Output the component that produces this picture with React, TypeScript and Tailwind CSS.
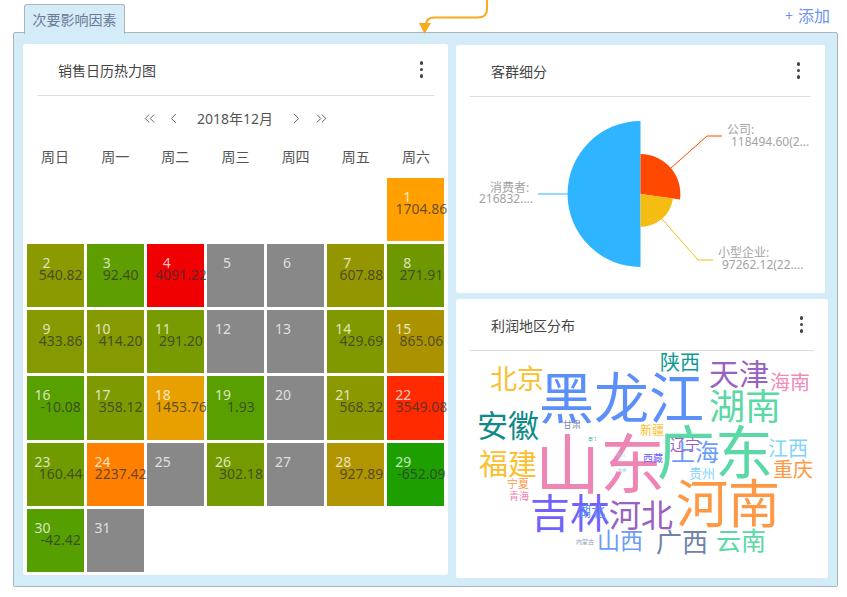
import React from "react";
import { ChevronLeft, ChevronRight, ChevronsLeft, ChevronsRight } from "lucide-react";

type Day = { d: number; v?: string; bg: string };

const days: Day[] = [
  { d: 1, v: "1704.86", bg: "bg-[#ffa000]" },
  { d: 2, v: "540.82", bg: "bg-[#8a9a00]" },
  { d: 3, v: "92.40", bg: "bg-[#5f9e00]" },
  { d: 4, v: "4091.22", bg: "bg-[#f00000]" },
  { d: 5, bg: "bg-[#888888]" },
  { d: 6, bg: "bg-[#888888]" },
  { d: 7, v: "607.88", bg: "bg-[#939600]" },
  { d: 8, v: "271.91", bg: "bg-[#6f9800]" },
  { d: 9, v: "433.86", bg: "bg-[#859a00]" },
  { d: 10, v: "414.20", bg: "bg-[#859a00]" },
  { d: 11, v: "291.20", bg: "bg-[#779b00]" },
  { d: 12, bg: "bg-[#888888]" },
  { d: 13, bg: "bg-[#888888]" },
  { d: 14, v: "429.69", bg: "bg-[#819900]" },
  { d: 15, v: "865.06", bg: "bg-[#ab9300]" },
  { d: 16, v: "-10.08", bg: "bg-[#589f00]" },
  { d: 17, v: "358.12", bg: "bg-[#7d9b00]" },
  { d: 18, v: "1453.76", bg: "bg-[#e8a000]" },
  { d: 19, v: "1.93", bg: "bg-[#5a9f00]" },
  { d: 20, bg: "bg-[#888888]" },
  { d: 21, v: "568.32", bg: "bg-[#8c9800]" },
  { d: 22, v: "3549.08", bg: "bg-[#ff2a00]" },
  { d: 23, v: "160.44", bg: "bg-[#6f9b00]" },
  { d: 24, v: "2237.42", bg: "bg-[#ff7f00]" },
  { d: 25, bg: "bg-[#888888]" },
  { d: 26, v: "302.18", bg: "bg-[#739b00]" },
  { d: 27, bg: "bg-[#888888]" },
  { d: 28, v: "927.89", bg: "bg-[#b09400]" },
  { d: 29, v: "-652.09", bg: "bg-[#1d9f00]" },
  { d: 30, v: "-42.42", bg: "bg-[#559f00]" },
  { d: 31, bg: "bg-[#888888]" },
];

const weekdays = ["周日", "周一", "周二", "周三", "周四", "周五", "周六"];

const words: { t: string; c: string }[] = [
  { t: "陕西", c: "left-[204px] top-[2px] text-[20px] text-[#0f9a96]" },
  { t: "天津", c: "left-[253px] top-[8px] text-[30px] text-[#9a62c0]" },
  { t: "海南", c: "left-[314px] top-[22px] text-[20px] text-[#f08cb8]" },
  { t: "北京", c: "left-[34px] top-[14px] text-[27px] text-[#fbc02d]" },
  { t: "黑龙江", c: "left-[83px] top-[18px] text-[55px] text-[#5b8ff9]" },
  { t: "湖南", c: "left-[253px] top-[38px] text-[36px] text-[#5ad8a6]" },
  { t: "安徽", c: "left-[21px] top-[59px] text-[31px] text-[#0f8a8a]" },
  { t: "甘肃", c: "left-[107px] top-[69px] text-[9px] text-[#7d8bb0]" },
  { t: "山东", c: "left-[79px] top-[80px] text-[65px] text-[#ee85b5]" },
  { t: "广东", c: "left-[201px] top-[72px] text-[58px] text-[#5ad8a6]" },
  { t: "新疆", c: "left-[184px] top-[74px] text-[12px] text-[#fbc02d]" },
  { t: "上海", c: "left-[215px] top-[89px] text-[24px] text-[#6b9cf9]" },
  { t: "辽宁", c: "left-[214px] top-[86px] text-[15px] text-[#9a62c0]" },
  { t: "江西", c: "left-[312px] top-[88px] text-[20px] text-[#7dd3fc]" },
  { t: "福建", c: "left-[23px] top-[98px] text-[29px] text-[#fbc02d]" },
  { t: "西藏", c: "left-[187px] top-[102px] text-[10px] text-[#7262fd]" },
  { t: "重庆", c: "left-[317px] top-[109px] text-[20px] text-[#ff9845]" },
  { t: "贵州", c: "left-[233px] top-[116px] text-[13px] text-[#7dd3fc]" },
  { t: "宁夏", c: "left-[51px] top-[127px] text-[11px] text-[#ff9845]" },
  { t: "青海", c: "left-[53px] top-[140px] text-[10px] text-[#ee85b5]" },
  { t: "吉林", c: "left-[74px] top-[142px] text-[40px] text-[#7262fd]" },
  { t: "湖北", c: "left-[121px] top-[153px] text-[14px] text-[#5b8ff9]" },
  { t: "河北", c: "left-[153px] top-[148px] text-[32px] text-[#9a62c0]" },
  { t: "河南", c: "left-[220px] top-[126px] text-[52px] text-[#ff9845]" },
  { t: "山西", c: "left-[141px] top-[178px] text-[23px] text-[#6b9cf9]" },
  { t: "广西", c: "left-[200px] top-[178px] text-[26px] text-[#6f83a8]" },
  { t: "云南", c: "left-[260px] top-[177px] text-[25px] text-[#5ad8a6]" },
  { t: "内蒙古", c: "left-[120px] top-[188px] text-[6px] text-[#8a9bb8]" },
  { t: "澳门", c: "left-[132px] top-[87px] text-[4px] text-[#0f9a96]" },
  { t: "四川", c: "left-[161px] top-[103px] text-[4px] text-[#7dd3fc]" },
  { t: "香港", c: "left-[162px] top-[118px] text-[4px] text-[#7dd3fc]" },
];

function Kebab() {
  return (
    <div className="flex flex-col gap-[3px]">
      <span className="w-[3.5px] h-[3.5px] rounded-full bg-[#444444]" />
      <span className="w-[3.5px] h-[3.5px] rounded-full bg-[#444444]" />
      <span className="w-[3.5px] h-[3.5px] rounded-full bg-[#444444]" />
    </div>
  );
}

function Header({ title }: { title: string }) {
  return (
    <div className="mx-[14px] h-[52px] shrink-0 border-b border-[#dddddd] flex items-center justify-between pl-[21px] pr-[11px]">
      <span className="text-[14px] text-[#444444] pt-[2px]">{title}</span>
      <Kebab />
    </div>
  );
}

function Cell({ day }: { day: Day }) {
  return (
    <div className={`h-[63.3px] flex flex-col ${day.bg}`}>
      <div className="w-[24px] mt-[9px] text-right text-[14px] leading-[19px] text-white/75">{day.d}</div>
      {day.v && (
        <div className="flex justify-center whitespace-nowrap pl-[11px] -mt-[7px] text-[14px] leading-[19px] text-[#333333]/75">
          {day.v}
        </div>
      )}
    </div>
  );
}

function Calendar() {
  return (
    <div className="w-[425px] h-[531px] bg-white rounded-[2px] flex flex-col shrink-0">
      <Header title="销售日历热力图" />
      <div className="h-[45px] flex items-center justify-center text-[#555555]">
        <ChevronsLeft size={17} strokeWidth={1.3} />
        <ChevronLeft size={17} strokeWidth={1.3} className="ml-[7px]" />
        <span className="mx-[15px] text-[14px] text-[#555555]">2018年12月</span>
        <ChevronRight size={17} strokeWidth={1.3} />
        <ChevronsRight size={17} strokeWidth={1.3} className="ml-[8px]" />
      </div>
      <div className="h-[36.5px] pl-[3.5px] pr-[3.5px] grid grid-cols-7 gap-x-[3px] items-center pb-[5px]">
        {weekdays.map((w) => (
          <div key={w} className="text-center text-[14px] text-[#555555]">{w}</div>
        ))}
      </div>
      <div className="pl-[3.5px] pr-[3.5px] grid grid-cols-7 gap-[3px]">
        <div className="col-span-6" />
        {days.map((d) => (
          <Cell key={d.d} day={d} />
        ))}
      </div>
    </div>
  );
}

function Pie() {
  const label = "#a3a3a3";
  return (
    <svg viewBox="456 97 369 196" className="w-[369px] h-[196px] font-['Noto_Sans','Noto_Sans_CJK_SC',sans-serif]">
      <path d="M640.5 194 L640.5 121 A73 73 0 0 0 640.5 267 Z" fill="#2fb4ff" />
      <path d="M640.5 194 L640.5 154 A40 40 0 0 1 680 199.6 Z" fill="#ff4800" />
      <path d="M640.5 194 L673 198.6 A33 33 0 0 1 640.5 227 Z" fill="#f5bc14" />
      <path d="M671 168 L707 136 L722 136" fill="none" stroke="#ff4800" strokeWidth="1" />
      <path d="M662 219 L698 260 L713 260" fill="none" stroke="#f5bc14" strokeWidth="1" />
      <path d="M568 194 L538 194" fill="none" stroke="#2fb4ff" strokeWidth="1" />
      <g fontSize="12" fill={label}>
        <text x="727" y="134">公司:</text>
        <text x="731" y="146">118494.60(2...</text>
        <text x="490" y="192">消费者:</text>
        <text x="479" y="203">216832....</text>
        <text x="718" y="257">小型企业:</text>
        <text x="722" y="269">97262.12(22....</text>
      </g>
    </svg>
  );
}

export default function App() {
  return (
    <div className="relative w-[847px] h-[597px] bg-white overflow-hidden font-['Noto_Sans','Noto_Sans_CJK_SC',sans-serif]">
      <svg viewBox="0 0 847 40" className="absolute left-0 top-0 w-[847px] h-[40px] z-20 pointer-events-none">
        <path d="M487 0 L487 9 Q487 17.5 478 17.5 L434 17.5 Q427 17.5 426 24" fill="none" stroke="#f7ab1f" strokeWidth="2" />
        <path d="M419 23 L431 23 L424.5 34 Z" fill="#f7ab1f" />
      </svg>
      <div className="h-[33px] pl-[24px] pr-[17px] flex items-end justify-between">
        <div className="relative z-10 -mb-px h-[30px] w-[101px] flex items-center justify-center bg-[#d3ecf8] border border-b-0 border-[#a9b4bb] rounded-t-[3px] text-[14px] text-[#6b7a99]">
          次要影响因素
        </div>
        <div className="h-[33px] flex items-center gap-[5px] pb-[2px] text-[#6f94ee]">
          <span className="text-[14px]">+</span>
          <span className="text-[16px]">添加</span>
        </div>
      </div>
      <div className="ml-[13px] w-[825px] h-[555px] -mt-px bg-[#d3ecf8] border border-[#a9b4bb] rounded-[2px] pt-[11px] pl-[9px] flex gap-[8px]">
        <Calendar />
        <div className="mt-px flex flex-col gap-[6px]">
          <div className="w-[369px] h-[248px] bg-white rounded-[2px] flex flex-col">
            <Header title="客群细分" />
            <Pie />
          </div>
          <div className="w-[372px] h-[279px] bg-white rounded-[2px] flex flex-col">
            <Header title="利润地区分布" />
            <div className="relative flex-1">
              {words.map((w) => (
                <span key={w.t} className={`absolute leading-none whitespace-nowrap ${w.c}`}>
                  {w.t}
                </span>
              ))}
            </div>
          </div>
        </div>
      </div>
    </div>
  );
}
